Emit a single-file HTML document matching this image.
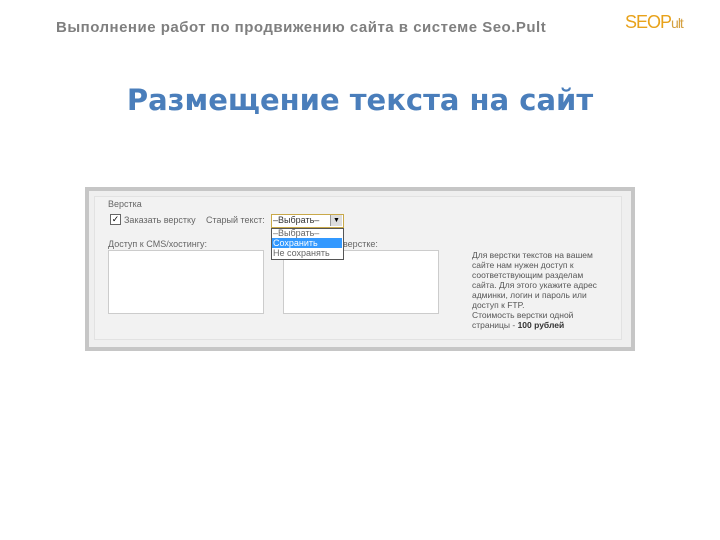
<!DOCTYPE html>
<html><head><meta charset="utf-8"><style>
body{margin:0;width:720px;height:540px;background:#fff;position:relative;overflow:hidden;font-family:"Liberation Sans",sans-serif}
.a{position:absolute}
.t{font-size:11px;color:#666;white-space:nowrap}
</style></head><body>
<div class="a" style="left:56px;top:19px;font-size:15px;font-weight:bold;color:#7f7f7f;letter-spacing:0.5px">Выполнение работ по продвижению сайта в системе Seo.Pult</div>
<div class="a" style="left:625px;top:12px;font-size:18px;color:#e8a21a;letter-spacing:-1px">SEOP<span style="font-size:14px;color:#d4a040">ult</span></div>
<div class="a" style="left:0;width:720px;top:83px;text-align:center;font-family:'DejaVu Sans',sans-serif;font-size:29px;font-weight:bold;color:#4a7ebb">Размещение текста на сайт</div>
<div class="a" style="left:85px;top:187px;width:542px;height:156px;border:4px solid #c6c6c6;background:#efefef"></div>
<div class="a" style="left:94px;top:196px;width:526px;height:142px;border:1px solid #e2e2e2;background:#f2f2f2"></div>
<div class="a t" style="left:108px;top:199px;font-size:9px">Верстка</div>
<div class="a" style="left:110px;top:214px;width:9px;height:9px;border:1px solid #666;background:#fff;font-size:9px;line-height:9px;text-align:center">✓</div>
<div class="a t" style="left:124px;top:215px;font-size:9px">Заказать верстку</div>
<div class="a t" style="left:206px;top:215px;font-size:9px">Старый текст:</div>
<div class="a t" style="left:108px;top:239px;font-size:9px">Доступ к CMS/хостингу:</div>
<div class="a t" style="left:343px;top:239px;font-size:9px">верстке:</div>
<div class="a" style="left:108px;top:250px;width:154px;height:62px;border:1px solid #ccc;background:#fff"></div>
<div class="a" style="left:283px;top:250px;width:154px;height:62px;border:1px solid #ccc;background:#fff"></div>
<div class="a" style="left:271px;top:214px;width:71px;height:12px;border:1px solid #c9a94a;background:#fff"></div>
<div class="a t" style="left:273px;top:215px;font-size:9px;color:#333">–Выбрать–</div>
<div class="a" style="left:330px;top:215px;width:11px;height:11px;background:#ddd;border-left:1px solid #999;font-size:7px;text-align:center;line-height:11px">▼</div>
<div class="a" style="left:271px;top:228px;width:71px;height:30px;border:1px solid #555;background:#fff"></div>
<div class="a t" style="left:273px;top:228px;font-size:9px">–Выбрать–</div>
<div class="a" style="left:272px;top:238px;width:70px;height:10px;background:#3399ff"></div>
<div class="a t" style="left:273px;top:238px;font-size:9px;color:#fff">Сохранить</div>
<div class="a t" style="left:273px;top:248px;font-size:9px">Не сохранять</div>
<div class="a t" style="left:472px;top:250px;font-size:8.5px;line-height:10px;white-space:normal;width:132px;color:#555">Для верстки текстов на вашем сайте нам нужен доступ к соответствующим разделам сайта. Для этого укажите адрес админки, логин и пароль или доступ к FTP.<br>Стоимость верстки одной страницы - <b style="color:#333">100 рублей</b></div>
</body></html>
